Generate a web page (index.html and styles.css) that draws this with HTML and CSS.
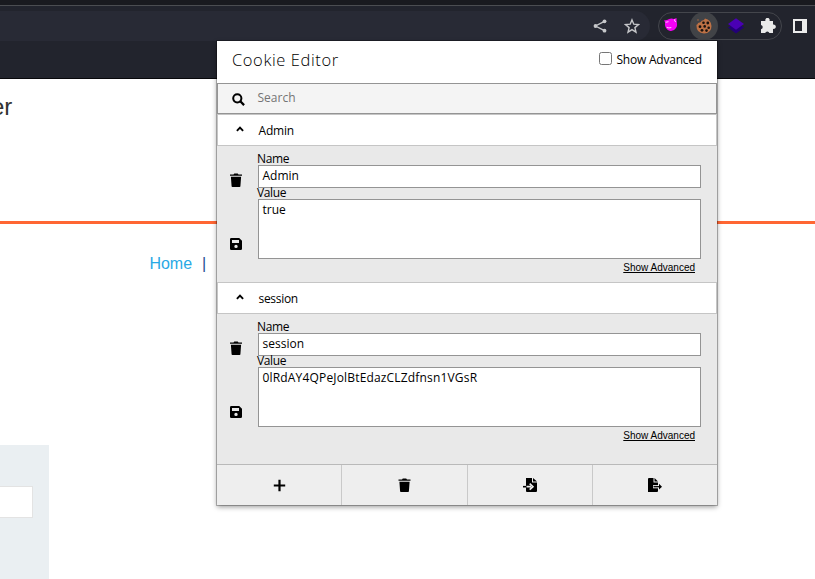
FILE: index.html
```html
<!DOCTYPE html>
<html lang="en">
<head>
<meta charset="utf-8">
<title>Cookie Editor</title>
<link rel="stylesheet" href="styles.css">
</head>
<body>
<svg class="sprites" width="0" height="0">
  <symbol id="trash" viewBox="0 0 12 14"><path d="M0 1.600h3.500L4.300.5h3.400l.8 1.100H12v1.200H0z"/><path d="M.9 3.700h10.200l-.7 9.500q0 .8-.8.8H2.400q-.8 0-.8-.8z"/></symbol>
  <symbol id="save" viewBox="0 0 12 12"><path fill-rule="evenodd" d="M1.300 0h7.900L12 2.800v7.900q0 1.300-1.300 1.300H1.300Q0 12 0 10.700V1.300Q0 0 1.300 0zM2 2v3h7V2zM6 6.700a1.700 1.700 0 1 0 0 3.400 1.700 1.700 0 0 0 0-3.400z"/></symbol>
  <symbol id="up" viewBox="0 0 8 6"><path d="M.9 4.900 4 1.700l3.100 3.200" fill="none" stroke="#000" stroke-width="1.900"/></symbol>
</svg>
<div class="chrome">
  <div class="tabstrip"></div>
  <div class="toolbar">
    <div class="omnibox">
      <svg width="14" height="14" viewBox="0 0 14 14"><path d="M11.500 2.300 2.500 7l9 4.700" fill="none" stroke="#c6c7ca" stroke-width="1.400"/><g fill="#c6c7ca"><circle cx="11.500" cy="2.300" r="1.900"/><circle cx="2.500" cy="7" r="1.900"/><circle cx="11.500" cy="11.700" r="1.900"/></g></svg>
      <svg width="16" height="16" viewBox="0 0 16 16"><path d="m8 1.900 1.800 4.300 4.700.4-3.600 3 1.100 4.600-4-2.500-4 2.500 1.100-4.600-3.600-3 4.700-.4z" fill="none" stroke="#c6c7ca" stroke-width="1.400"/></svg>
    </div>
    <div class="extensions">
      <svg class="blob" width="14" height="14" viewBox="0 0 14 14"><path d="M0 2.500 3 2q3.500-2.500 7-1L12.500 0l.2 4.500q1 3-.7 5.500-2 3.300-5.500 3Q3 12.600 1.500 9 .5 6 1.300 4.500z" fill="#f500f5"/><path d="m1.500 4.300 3-.6M10.700 1.200V3l1.500 1M2.800 9.200q2 1.400 4.500.3" fill="none" stroke="#ffc4ff"/></svg>
      <span class="active">
        <svg width="16" height="16" viewBox="0 0 16 16"><path d="M9 .5q-1 2.500-3 2-1 2.200-4 2.500-.1 1.700-1.500 1.700Q-.1 15.300 8 15.500q7.500-.4 7.500-7.500Q15 1.600 9 .5z" fill="#bd7145"/><g fill="#18120f"><circle cx="7.500" cy="4.800" r="1.300"/><circle cx="11.800" cy="5" r="1.400"/><circle cx="4" cy="8.700" r="1.400"/><circle cx="8.700" cy="8.400" r="1.300"/><circle cx="12.700" cy="9.700" r="1.300"/><circle cx="6" cy="12.300" r="1.400"/><circle cx="10.500" cy="12.600" r="1.300"/><circle cx="2" cy="2" r=".7" fill="#bd7145"/></g></svg>
      </span>
      <svg width="16" height="16" viewBox="0 0 16 16"><path d="M0 9.500 8 4l8 5.500L8 15.500z" fill="#230078"/><path d="M0 6 8 .3 16 6l-8 5.700z" fill="#4a00b4"/></svg>
      <svg width="16" height="16" viewBox="0 0 16 16"><path d="M1 3h4.500a2.200 2.200 0 1 1 4 0H13v3.600a2.200 2.200 0 1 1 0 4.200V15H9.400a2.200 2.200 0 0 0-4.200 0H1v-3.800a2.200 2.200 0 0 0 0-4.300z" fill="#e9e9e9"/></svg>
    </div>
    <svg class="panel-icon" width="14" height="14" viewBox="0 0 14 14"><path d="M0 0h14v14H0zM2 2v10h7V2z" fill="#ececec" fill-rule="evenodd"/></svg>
  </div>
</div>
<main class="site">
  <header class="site-head">er</header>
  <nav class="site-nav"><a>Home</a><span>|</span></nav>
  <div class="form-card"><div class="field"></div></div>
</main>

<section class="popup">
  <header class="title-row">
    <h1>Cookie Editor</h1>
    <label><input type="checkbox"><span>Show Advanced</span></label>
  </header>
  <div class="search">
    <svg width="13" height="13" viewBox="0 0 13 13"><circle cx="5.300" cy="5.300" r="4.100" fill="none" stroke="#000" stroke-width="2"/><path d="m8.300 8.300 3.800 3.800" stroke="#000" stroke-width="2.300"/></svg>
    <span>Search</span>
  </div>
  <div class="cookie">
    <div class="cookie-head"><svg width="8" height="6"><use href="#up"/></svg><span>Admin</span></div>
    <div class="cookie-body">
      <div class="actions"><svg width="12" height="14"><use href="#trash"/></svg><svg width="12" height="12"><use href="#save"/></svg></div>
      <div class="fields">
        <div class="label">Name</div><div class="box name">Admin</div>
        <div class="label">Value</div><div class="box value">true</div>
        <a class="more">Show Advanced</a>
      </div>
    </div>
  </div>
  <div class="cookie last">
    <div class="cookie-head"><svg width="8" height="6"><use href="#up"/></svg><span class="session">session</span></div>
    <div class="cookie-body">
      <div class="actions"><svg width="12" height="14"><use href="#trash"/></svg><svg width="12" height="12"><use href="#save"/></svg></div>
      <div class="fields">
        <div class="label">Name</div><div class="box name session">session</div>
        <div class="label">Value</div><div class="box value token">0lRdAY4QPeJolBtEdazCLZdfnsn1VGsR</div>
        <a class="more">Show Advanced</a>
      </div>
    </div>
  </div>
  <footer class="bar">
    <div><svg width="13" height="13" viewBox="0 0 13 13"><path d="M6.500.8v11.400M.8 6.500h11.400" stroke="#000" stroke-width="2.200"/></svg></div>
    <div><svg width="13" height="14"><use href="#trash"/></svg></div>
    <div><svg width="14" height="14" viewBox="0 0 14 14"><path d="M3 0h6v4.500h5V13q0 1-1 1H4q-1 0-1-1z"/><path d="M10 0v3.500h4z"/><path d="M0 8.700h3" stroke="#000" stroke-width="1.600"/><path d="M3.500 8.700H8M6.700 5.700l3.200 3-3.200 3" stroke="#eee" stroke-width="1.700" fill="none"/></svg></div>
    <div><svg width="14" height="14" viewBox="0 0 14 14"><path d="M0 1q0-1 1-1h4.500v4.500H10V13q0 1-1 1H0z"/><path d="M6.500 0v3.500H10z"/><path d="M5 8.700h5" stroke="#eee" stroke-width="3.200"/><path d="M5.500 8.700H13" stroke="#000" stroke-width="1.300"/><path d="m11 5.800 3 2.900-3 2.900z"/></svg></div>
  </footer>
</section>
</body>
</html>
```

FILE: styles.css
```css
* { box-sizing: border-box; }
body { margin: 0; width: 815px; height: 579px; overflow: hidden; background: #fff; font-family: "Open Sans", sans-serif; color: #000; }
.sprites { position: absolute; }
svg { display: block; flex: none; }
.chrome { height: 79px; background: #22242d; border-bottom: 1px solid #08080b; }
.tabstrip { height: 6px; background: #191a1f; border-bottom: 1px solid #4b4d51; }
.toolbar { height: 40px; display: flex; align-items: center; }
.omnibox { width: 650px; height: 30px; background: #282a35; border-radius: 0 15px 15px 0; display: flex; align-items: center; justify-content: flex-end; gap: 17px; padding-right: 10px; }
.extensions { margin-left: 8px; width: 124px; height: 28px; border: 1px solid #44464c; border-radius: 14px; display: flex; align-items: center; justify-content: space-between; padding: 0 5px; }
.blob { margin-bottom: 2px; }
.active { width: 28px; height: 28px; margin: 0 -6px 0 -4px; border-radius: 50%; background: #414347; display: grid; place-items: center; }
.panel-icon { margin-left: 11px; }
.site { font-family: "Liberation Sans", sans-serif; }
.site-head { height: 145px; border-bottom: 3px solid #ff6633; padding-top: 13px; line-height: 30px; font-size: 24px; color: #333332; text-indent: -9px; }
.site-nav { height: 221px; padding: 30px 0 0 149.400px; display: flex; gap: 10px; font-size: 16px; line-height: 20px; color: #29a9e5; }
.site-nav span { color: #1d5090; }
.form-card { width: 49px; height: 134px; padding-top: 41px; background: #eaeff2; }
.field { width: 33px; height: 32px; background: #fff; border: 1px solid #e3e3e3; border-left: 0; }

.popup { position: absolute; left: 217px; top: 41px; width: 500px; height: 464px; background: #e9e9e9; font-size: 12px; box-shadow: 0 0 0 1px rgba(0,0,0,.25), 0 2px 5px rgba(0,0,0,.4); }
.title-row { height: 42px; padding: 0 15px; background: #fff; display: flex; justify-content: space-between; }
h1 { margin: 0; font-size: 16.500px; line-height: 38px; font-weight: 300; letter-spacing: .6px; }
.title-row label { display: flex; gap: 5px; line-height: 37px; letter-spacing: -.22px; }
.title-row input { width: 13px; height: 13px; margin: 11px 0 0; }
.search { height: 31px; border: 1px solid #949494; background: #f4f4f4; display: flex; align-items: center; gap: 13px; padding-left: 13.500px; color: #757575; }
.search span { line-height: 28px; padding-bottom: 2px; }
.search svg { margin-top: 1px; }
.cookie { height: 168px; }
.cookie.last { height: 182px; }
.cookie-head { height: 32px; border: 1px solid #c5c5c5; background: #fff; display: flex; align-items: center; gap: 14.500px; padding-left: 18px; letter-spacing: -.2px; }
.cookie-head svg { margin-bottom: 2px; }
.cookie-head span { padding-top: 1px; }
.cookie-head .session { letter-spacing: -.3px; }
.cookie-body { display: flex; }
.actions { width: 41px; padding: 27px 0 0 12.500px; display: flex; flex-direction: column; gap: 51px; }
.fields { width: 443px; display: flex; flex-direction: column; padding-top: 5px; }
.label { height: 14px; line-height: 16px; margin-left: -1px; letter-spacing: -.35px; }
.box { border: 1px solid #949494; background: #fff; padding-left: 3.500px; line-height: 20px; }
.name { height: 23px; }
.name + .label { height: 11px; line-height: 10px; }
.value { height: 60px; }
.token { letter-spacing: .17px; }
.more { align-self: flex-end; margin-right: 6px; padding-top: 1px; font: 10px/15px "Liberation Sans", sans-serif; text-decoration: underline; }
.bar { height: 41px; display: grid; grid-template-columns: 125px 126px 125px 124px; background: #eee; border-top: 1px solid #b9b9b9; }
.bar div { display: grid; place-items: center; border-right: 1px solid #c9c9c9; }
.bar div:last-child { border-right: 0; }
```
